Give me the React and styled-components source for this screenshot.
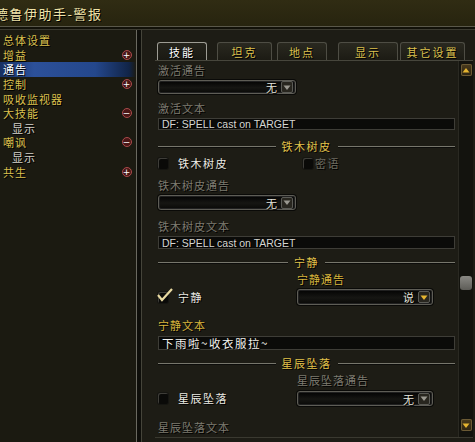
import React from 'react';
import styled, { createGlobalStyle } from 'styled-components';

const cjk = `"Noto Sans CJK SC", "Noto Sans", sans-serif`;

const GlobalStyle = createGlobalStyle`
  html, body {
    margin: 0;
    padding: 0;
    background: #1b1a12;
  }
  body {
    width: 475px;
    height: 442px;
    overflow: hidden;
  }
`;

const Frame = styled.div`
  width: 475px;
  height: 442px;
  display: flex;
  flex-direction: column;
  background: #1c1b13;
  font-family: ${cjk};
  overflow: hidden;
  text-shadow: 1px 1px 0 #000;
`;

const TitleBar = styled.div`
  height: 26px;
  flex: none;
  display: flex;
  align-items: center;
  background: linear-gradient(#302c13, #27240f);
  border-bottom: 1px solid #5a584a;
  box-shadow: 0 2px 0 #121109, 0 3px 0 #3c3b31;
  margin-bottom: 3px;
`;

const Title = styled.h1`
  margin: 0 0 0 -5px;
  font-size: 13px;
  font-weight: 400;
  letter-spacing: 1.5px;
  color: #efe2a8;
`;

const Body = styled.div`
  flex: 1;
  min-height: 0;
  display: flex;
`;

const Tree = styled.ul`
  width: 136px;
  flex: none;
  margin: 0;
  padding: 3px 0 0;
  list-style: none;
  background: #1b1a11;
`;

const TreeItem = styled.li`
  height: 14.6px;
  display: flex;
  align-items: center;
  padding: 0 4px 0 ${p => (p.$indent ? 12 : 3)}px;
  font-size: 11px;
  letter-spacing: 1px;
  color: ${p => (p.$selected ? '#ffffff' : p.$indent ? '#d6d4cc' : '#dcc14e')};
  background: ${p =>
    p.$selected
      ? 'linear-gradient(to right, #173062, #2c5099 25%, #24478c 70%, #112447 95%, transparent)'
      : 'none'};
`;

const Toggle = styled.span`
  margin-left: auto;
  width: 8px;
  height: 8px;
  border-radius: 50%;
  border: 1px solid #a84a4a;
  background: #4a1717;
  display: flex;
  align-items: center;
  justify-content: center;
  color: #fff;
  font-size: 9px;
  line-height: 8px;
  font-family: "DejaVu Sans", sans-serif;
  text-shadow: none;
`;

const Divider = styled.div`
  width: 4px;
  flex: none;
  border-left: 1px solid #6a6960;
  border-right: 1px solid #45443a;
  background: #0e0e0a;
`;

const Main = styled.div`
  flex: 1;
  display: flex;
  flex-direction: column;
  padding: 12px 2px 4px 13px;
  background: #1d1c15;
`;

const TabRow = styled.div`
  height: 18px;
  flex: none;
  display: flex;
  padding-left: 2px;
`;

const Tab = styled.div`
  width: ${p => p.$w}px;
  margin-left: ${p => p.$gap}px;
  box-sizing: border-box;
  display: flex;
  align-items: center;
  justify-content: center;
  font-size: 11px;
  letter-spacing: 2px;
  color: ${p => (p.$active ? '#ffffff' : '#dcc14e')};
  border: 1px solid ${p => (p.$active ? '#9d9c94' : '#4e4d44')};
  border-bottom: none;
  border-radius: 3px 3px 0 0;
  background: ${p =>
    p.$active ? 'linear-gradient(#24231b, #1a1913)' : 'linear-gradient(#2a2920, #1c1b14)'};
`;

const ContentBox = styled.div`
  flex: 1;
  display: flex;
  border-top: 1px solid #47463c;
  border-bottom: 1px solid #3a3930;
`;

const Content = styled.div`
  flex: 1;
  display: flex;
  flex-direction: column;
  padding: 2px 3px 0 3px;
`;

const Label = styled.div`
  height: 14px;
  line-height: 14px;
  margin-top: ${p => p.$mt || 0}px;
  font-size: 11px;
  letter-spacing: 1px;
  color: ${p => (p.$gold ? '#d9b63c' : '#7d7b70')};
`;

const SelectBox = styled.div`
  width: ${p => p.$w}px;
  height: ${p => p.$h}px;
  margin-top: ${p => p.$mt || 0}px;
  box-sizing: border-box;
  display: flex;
  align-items: center;
  justify-content: flex-end;
  padding-right: 2px;
  border: 1px solid #5e5d56;
  border-radius: 3px;
  background: linear-gradient(#030303, #161613 55%, #090907);
  box-shadow: inset 0 0 0 1px #202020, 0 0 0 1px #0a0a08;
`;

const SelectValue = styled.span`
  font-size: 11px;
  color: #e6e6de;
  margin-right: 4px;
`;

const SelectButton = styled.span`
  width: 10px;
  height: 10px;
  border: 1px solid #5a5a55;
  border-radius: 2px;
  background: #28261f;
  display: flex;
  align-items: center;
  justify-content: center;
`;

const EditBox = styled.div`
  height: ${p => p.$h}px;
  margin-top: ${p => p.$mt || 0}px;
  box-sizing: border-box;
  display: flex;
  align-items: center;
  padding-left: 3px;
  border: 1px solid #3e3d37;
  background: #0b0b09;
  color: ${p => (p.$cjk ? '#f2f2ee' : '#d6d6d2')};
  font-family: ${p => (p.$cjk ? cjk : '"Liberation Sans", Arial, sans-serif')};
  font-size: ${p => (p.$cjk ? 11.5 : 10.5)}px;
  letter-spacing: ${p => (p.$cjk ? 1.5 : 0)}px;
`;

const Heading = styled.div`
  height: 14px;
  margin-top: ${p => p.$mt || 0}px;
  display: flex;
  align-items: center;
  gap: 6px;
  font-size: 11px;
  letter-spacing: 1.5px;
  color: #e2c24a;

  &::before,
  &::after {
    content: '';
    flex: 1;
    height: 1px;
    background: #77766c;
    box-shadow: 0 1px 0 #0c0c0a;
  }
`;

const CheckRow = styled.div`
  height: 14px;
  margin-top: ${p => p.$mt || 0}px;
  display: flex;
  align-items: center;
`;

const CheckItem = styled.div`
  display: flex;
  align-items: center;
  width: ${p => p.$w || 'auto'};
  font-size: 11px;
  letter-spacing: 1.5px;
  color: ${p => (p.$dim ? '#6c6a60' : '#ecebe4')};
`;

const Box = styled.span`
  width: 10px;
  height: 11px;
  margin-right: ${p => p.$gap}px;
  flex: none;
  position: relative;
  background: #0a0a08;
  border-radius: 2px;
  box-shadow: inset 1px 1px 0 #3e3d38, 0 0 0 1px #151511;
`;

const Tick = styled.svg`
  position: absolute;
  left: -1px;
  top: -4px;
`;

const Split = styled.div`
  display: flex;
`;

const SplitLeft = styled.div`
  width: 139px;
  flex: none;
  padding-top: ${p => p.$pt}px;
`;

const SplitRight = styled.div`
  display: flex;
  flex-direction: column;
`;

const Scrollbar = styled.div`
  width: 14px;
  flex: none;
  display: flex;
  flex-direction: column;
  align-items: center;
  background: #13130e;
  border-left: 1px solid #2a2922;
`;

const ScrollButton = styled.div`
  width: 11px;
  height: 12px;
  margin-top: ${p => p.$mt || 0}px;
  margin-bottom: ${p => p.$mb || 0}px;
  border-radius: 2px;
  background: linear-gradient(#4a3b1c, #2c2312);
  box-shadow: inset 0 0 0 1px #6b5a34;
  display: flex;
  align-items: center;
  justify-content: center;
`;

const Thumb = styled.div`
  width: 12px;
  height: 14px;
  margin-top: 200px;
  border-radius: 3px;
  background: linear-gradient(#8a8984, #5d5c57);
`;

const Spacer = styled.div`
  flex: 1;
`;

const Arrow = ({ down, on = true }) => (
  <svg width="8" height="7" viewBox="0 0 8 7">
    <path
      d={down ? 'M0.5 1.5 L7.5 1.5 L4 6 Z' : 'M0.5 5.5 L7.5 5.5 L4 1 Z'}
      fill={on ? '#e6b530' : '#9a9890'}
    />
  </svg>
);

const Select = ({ w, h, mt, value, on }) => (
  <SelectBox $w={w} $h={h} $mt={mt}>
    <SelectValue>{value}</SelectValue>
    <SelectButton>
      <Arrow down on={on} />
    </SelectButton>
  </SelectBox>
);

const Check = ({ label, checked, dim, w, gap = 10 }) => (
  <CheckItem $dim={dim} $w={w}>
    <Box $gap={gap}>
      {checked && (
        <Tick width="16" height="14" viewBox="0 0 16 14">
          <path d="M1 7 L5 12 L15 1" fill="none" stroke="#e8d9a0" strokeWidth="2.2" />
        </Tick>
      )}
    </Box>
    {label}
  </CheckItem>
);

const tree = [
  { text: '总体设置' },
  { text: '增益', toggle: '+' },
  { text: '通告', selected: true },
  { text: '控制', toggle: '+' },
  { text: '吸收监视器' },
  { text: '大技能', toggle: '−' },
  { text: '显示', indent: true },
  { text: '嘲讽', toggle: '−' },
  { text: '显示', indent: true },
  { text: '共生', toggle: '+' },
];

const tabs = [
  { text: '技能', w: 50, gap: 0, active: true },
  { text: '坦克', w: 55, gap: 10 },
  { text: '地点', w: 50, gap: 5 },
  { text: '显示', w: 60, gap: 11 },
  { text: '其它设置', w: 65, gap: 2 },
];

const App = () => (
  <Frame>
    <GlobalStyle />
    <TitleBar>
      <Title>德鲁伊助手-警报</Title>
    </TitleBar>
    <Body>
      <Tree>
        {tree.map((item, i) => (
          <TreeItem key={i} $selected={item.selected} $indent={item.indent}>
            {item.text}
            {item.toggle && <Toggle>{item.toggle}</Toggle>}
          </TreeItem>
        ))}
      </Tree>
      <Divider />
      <Main>
        <TabRow>
          {tabs.map(t => (
            <Tab key={t.text} $w={t.w} $gap={t.gap} $active={t.active}>
              {t.text}
            </Tab>
          ))}
        </TabRow>
        <ContentBox>
          <Content>
            <Label>激活通告</Label>
            <Select w={138} h={14} mt={3} value="无" on={false} />
            <Label $mt={7}>激活文本</Label>
            <EditBox $h={12} $mt={3}>DF: SPELL cast on TARGET</EditBox>

            <Heading $mt={9}>铁木树皮</Heading>
            <CheckRow $mt={3}>
              <Check label="铁木树皮" w="145px" />
              <Check label="密语" dim gap={2} />
            </CheckRow>
            <Label $mt={8}>铁木树皮通告</Label>
            <Select w={138} h={15} mt={3} value="无" on={false} />
            <Label $mt={9}>铁木树皮文本</Label>
            <EditBox $h={13} $mt={3}>DF: SPELL cast on TARGET</EditBox>

            <Heading $mt={6}>宁静</Heading>
            <Split>
              <SplitLeft $pt={21}>
                <CheckRow>
                  <Check label="宁静" checked />
                </CheckRow>
              </SplitLeft>
              <SplitRight>
                <Label $gold $mt={3}>宁静通告</Label>
                <Select w={136} h={16} mt={3} value="说" on />
              </SplitRight>
            </Split>
            <Label $gold $mt={13}>宁静文本</Label>
            <EditBox $h={14} $mt={4} $cjk>下雨啦~收衣服拉~</EditBox>

            <Heading $mt={6}>星辰坠落</Heading>
            <Split>
              <SplitLeft $pt={21}>
                <CheckRow>
                  <Check label="星辰坠落" />
                </CheckRow>
              </SplitLeft>
              <SplitRight>
                <Label $mt={3}>星辰坠落通告</Label>
                <Select w={136} h={15} mt={4} value="无" on={false} />
              </SplitRight>
            </Split>
            <Label $mt={14}>星辰坠落文本</Label>
          </Content>
          <Scrollbar>
            <ScrollButton $mt={3}>
              <Arrow />
            </ScrollButton>
            <Thumb />
            <Spacer />
            <ScrollButton $mb={6}>
              <Arrow down />
            </ScrollButton>
          </Scrollbar>
        </ContentBox>
      </Main>
    </Body>
  </Frame>
);

export default App;
